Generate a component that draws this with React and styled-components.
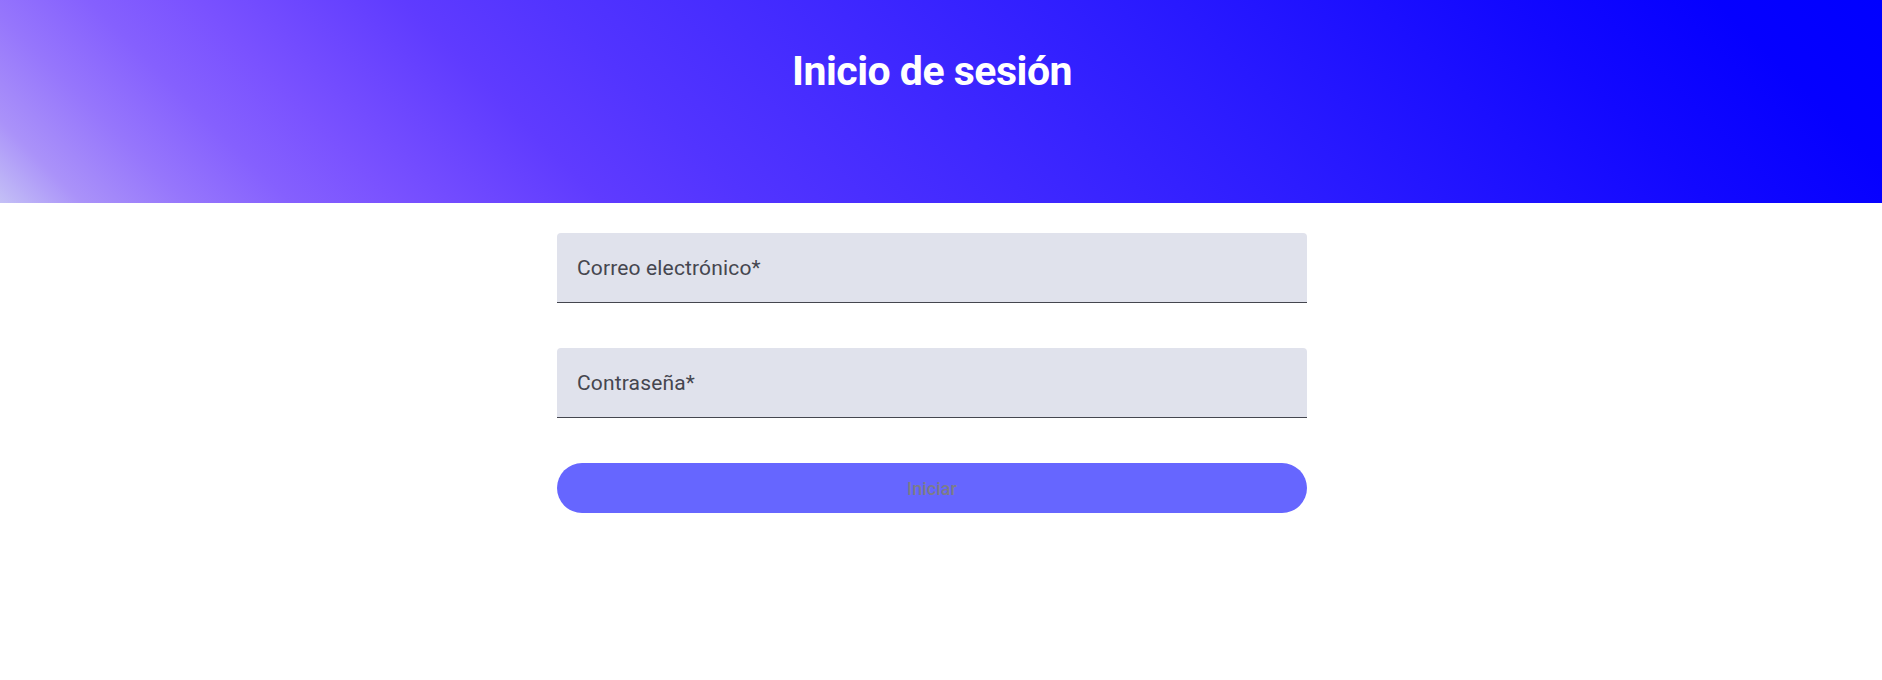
import React from "react"
import styled, { createGlobalStyle } from "styled-components"

const GlobalStyle = createGlobalStyle`
    html, body {
        margin: 0;
        padding: 0;
        background: #fff;
        font-family: Roboto, "Liberation Sans", sans-serif;
    }
`

const Page = styled.div`
    display: flex;
    flex-direction: column;
    width: 100%;
    min-height: 680px;
`

const Header = styled.header`
    height: 203px;
    box-sizing: border-box;
    padding: 47px 18px 0 0;
    background: linear-gradient(
        45deg,
        #c4c0f6 0%,
        #aa92f9 4%,
        #9676fc 9%,
        #8560fe 14%,
        #7a52ff 19%,
        #5f3bff 29%,
        #5234ff 36%,
        #2c1cff 63%,
        #1208ff 82%,
        #0500ff 92%,
        #0000ff 100%
    );
`

const Title = styled.h1`
    margin: 0;
    text-align: center;
    color: #fff;
    font-size: 41px;
    line-height: 48px;
    font-weight: 700;
    letter-spacing: -0.5px;
`

const Form = styled.form`
    width: 750px;
    margin: 30px auto 0;
    position: relative;
    left: -9px;
    display: flex;
    flex-direction: column;
    gap: 45px;
`

const Field = styled.label`
    height: 69px;
    display: flex;
    align-items: center;
    padding-left: 20px;
    background: #e0e2ec;
    border-radius: 4px 4px 0 0;
    border-bottom: 1px solid #44464f;
    color: #45464f;
    font-size: 21px;
    letter-spacing: 0.15px;
    cursor: text;
`

const SubmitButton = styled.button`
    height: 50px;
    border: none;
    border-radius: 25px;
    background: #6666ff;
    color: #7d7d88;
    font-family: Roboto, "Liberation Sans", sans-serif;
    font-size: 18px;
    font-weight: 500;
    cursor: default;
`

const fields = [
    { id: "email", label: "Correo electrónico*" },
    { id: "password", label: "Contraseña*" },
]

const App = () => {
    return (
        <Page>
            <GlobalStyle />
            <Header>
                <Title>Inicio de sesión</Title>
            </Header>
            <Form onSubmit={e => e.preventDefault()}>
                {fields.map(item =>
                    <Field key={item.id}>{item.label}</Field>
                )}
                <SubmitButton type="submit" disabled>Iniciar</SubmitButton>
            </Form>
        </Page>
    )
}

export default App
